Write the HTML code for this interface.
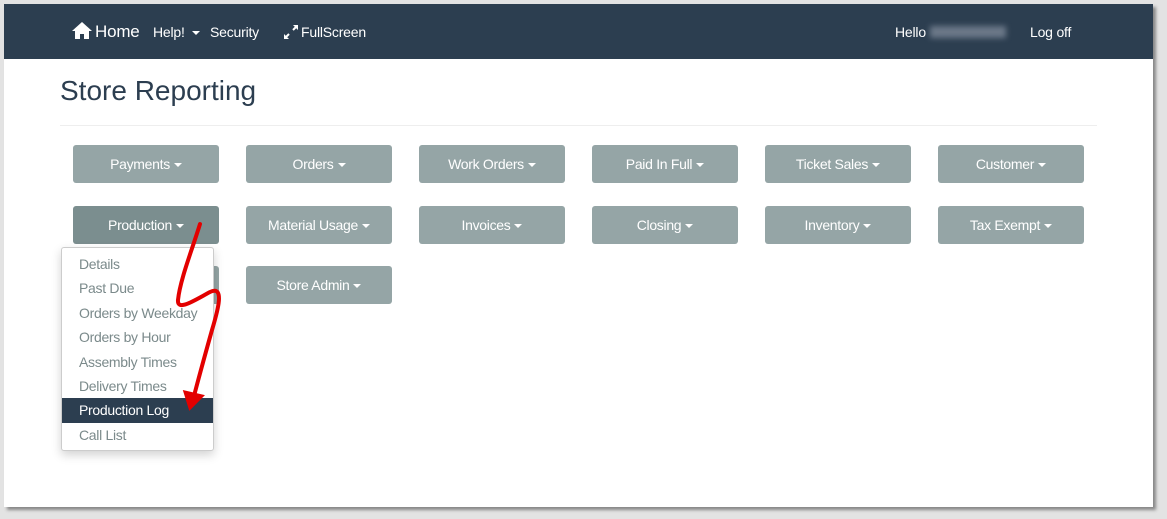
<!DOCTYPE html>
<html><head><style>
body{margin:0;width:1167px;height:519px;background:#e3e3e3;font-family:"Liberation Sans",sans-serif;position:relative;overflow:hidden}
.page{position:absolute;left:4px;top:4px;width:1149px;height:503px;background:#fff;box-shadow:3px 3px 3px #888}
.nav{position:absolute;left:0;top:0;width:1149px;height:55px;background:#2c3e50;color:#fff}
.nav span{position:absolute;top:20px;font-size:14px;letter-spacing:-0.2px}
h1{position:absolute;left:56px;top:71px;margin:0;font-weight:normal;font-size:28px;color:#2c3e50}
.hr{position:absolute;left:56px;top:121px;width:1037px;height:1px;background:#eee}
.b{position:absolute;width:146px;height:38px;background:#95a5a6;border-radius:3px;color:#fff;font-size:14px;letter-spacing:-0.3px;text-align:center;line-height:38px}
.c{display:inline-block;width:0;height:0;border-left:4px solid transparent;border-right:4px solid transparent;border-top:4px solid #fff;vertical-align:middle;margin-left:4px}
.dd{position:absolute;left:57px;top:243px;width:151px;height:202px;background:#fff;border:1px solid #ccc;border-radius:3px;box-shadow:0 4px 10px rgba(0,0,0,.18)}
.dd div{height:24.4px;line-height:24.4px;padding-left:17px;font-size:14px;letter-spacing:-0.3px;color:#7b8a8b}
.dd .a{background:#2c3e50;color:#fff}
</style></head><body>
<div class="page">
<div class="nav">
<svg style="position:absolute;left:68px;top:18px" width="20" height="17" viewBox="0 0 20 17"><path d="M10 0L0 9h3v8h5v-5h4v5h5V9h3z" fill="#fff"/></svg>
<span style="left:91px;top:18px;font-size:17px">Home</span>
<span style="left:149px">Help! <i class="c"></i></span>
<span style="left:206px">Security</span>
<svg style="position:absolute;left:280px;top:21px" width="14" height="14" viewBox="0 0 14 14"><path d="M1 13L5 9M13 1L9 5" stroke="#fff" stroke-width="2"/><path d="M0 14V9L5 14zM14 0V5L9 0z" fill="#fff"/></svg>
<span style="left:297px">FullScreen</span>
<span style="left:891px">Hello</span>
<div style="position:absolute;left:926px;top:22px;width:76px;height:12px;background:#6b7888;filter:blur(3px)"></div>
<span style="left:1026px">Log off</span>
</div>
<h1>Store Reporting</h1>
<div class="hr"></div>
<div class="b" style="left:69px;top:141px">Payments<i class="c"></i></div>
<div class="b" style="left:242px;top:141px">Orders<i class="c"></i></div>
<div class="b" style="left:415px;top:141px">Work Orders<i class="c"></i></div>
<div class="b" style="left:588px;top:141px">Paid In Full<i class="c"></i></div>
<div class="b" style="left:761px;top:141px">Ticket Sales<i class="c"></i></div>
<div class="b" style="left:934px;top:141px">Customer<i class="c"></i></div>
<div class="b" style="left:69px;top:202px;background:#7b8e8f">Production<i class="c"></i></div>
<div class="b" style="left:242px;top:202px">Material Usage<i class="c"></i></div>
<div class="b" style="left:415px;top:202px">Invoices<i class="c"></i></div>
<div class="b" style="left:588px;top:202px">Closing<i class="c"></i></div>
<div class="b" style="left:761px;top:202px">Inventory<i class="c"></i></div>
<div class="b" style="left:934px;top:202px">Tax Exempt<i class="c"></i></div>
<div class="b" style="left:69px;top:262px"></div>
<div class="b" style="left:242px;top:262px">Store Admin<i class="c"></i></div>
<div class="dd">
<div style="margin-top:4px">Details</div><div>Past Due</div><div>Orders by Weekday</div><div>Orders by Hour</div><div>Assembly Times</div><div>Delivery Times</div><div class="a">Production Log</div><div>Call List</div>
</div>
</div>
<svg style="position:absolute;left:0;top:0" width="1167" height="519"><path d="M200 224C192 250 180 280 178 300C177 312 195 300 210 292C225 285 218 310 212 330C205 355 198 380 193 400" stroke="#e30000" stroke-width="4" fill="none" stroke-linecap="round"/><path d="M185 392L190 408L202 396z" fill="#e30000" stroke="#e30000" stroke-width="3"/></svg>
</body></html>
